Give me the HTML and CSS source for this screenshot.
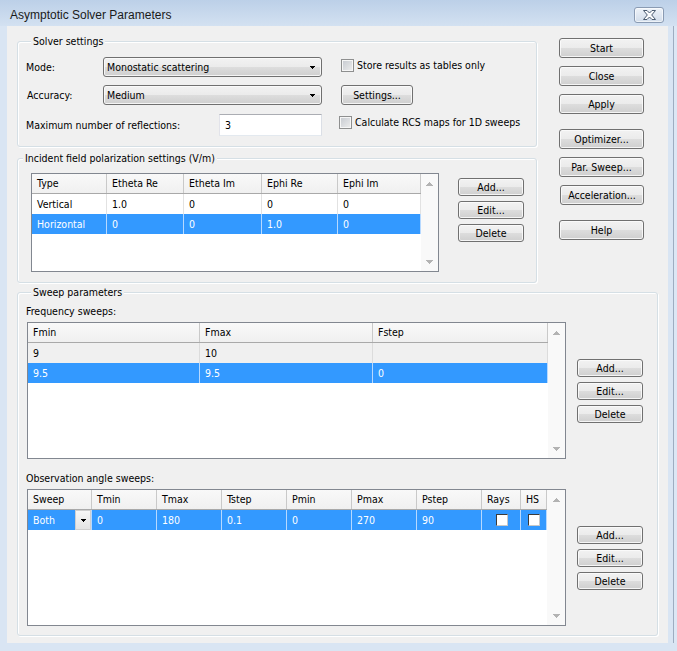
FILE: index.html
```html
<!DOCTYPE html>
<html>
<head>
<meta charset="utf-8">
<title>Asymptotic Solver Parameters</title>
<link rel="stylesheet" href="styles.css">
</head>
<body>
<div class="window">
  <div class="titlebar">
    <span class="title">Asymptotic Solver Parameters</span>
    <div class="close-btn">
      <svg width="13" height="10" viewBox="0 0 13 10"><polygon points="0.5,0.5 4,0.5 6.5,3 9,0.5 12.5,0.5 8.7,5 12.5,9.5 9,9.5 6.5,7 4,9.5 0.5,9.5 4.3,5" fill="#fbfcfd" stroke="#4a5b70" stroke-width="1" stroke-linejoin="round"/></svg>
    </div>
  </div>
  <div class="frame-row">
    <div class="frame-left"></div>
    <div class="client">
      <div class="top">
        <div class="left-col">
          <div class="group solver">
            <div class="group-title">Solver settings</div>
            <div class="row row1">
              <span class="lbl lbl-short">Mode:</span>
              <div class="btn combo"><span>Monostatic scattering</span><svg class="dd-arrow" width="5" height="3" viewBox="0 0 5 3"><rect x="0" y="0" width="5" height="1"/><rect x="1" y="1" width="3" height="1"/><rect x="2" y="2" width="1" height="1"/></svg></div>
              <div class="check-item"><span class="checkbox"></span><span>Store results as tables only</span></div>
            </div>
            <div class="row row2">
              <span class="lbl lbl-short lbl-acc">Accuracy:</span>
              <div class="btn combo"><span>Medium</span><svg class="dd-arrow" width="5" height="3" viewBox="0 0 5 3"><rect x="0" y="0" width="5" height="1"/><rect x="1" y="1" width="3" height="1"/><rect x="2" y="2" width="1" height="1"/></svg></div>
              <div class="btn settings-btn">Settings...</div>
            </div>
            <div class="row row3">
              <span class="lbl lbl-long">Maximum number of reflections:</span>
              <div class="textinput">3</div>
              <div class="check-item check-rcs"><span class="checkbox"></span><span>Calculate RCS maps for 1D sweeps</span></div>
            </div>
          </div>

          <div class="group incident">
            <div class="group-title">Incident field polarization settings (V/m)</div>
            <div class="inc-body">
              <div class="list list-inc">
                <div class="grid">
                  <div class="hdr inc-cols">
                    <div class="cell">Type</div><div class="cell">Etheta Re</div><div class="cell">Etheta Im</div><div class="cell">Ephi Re</div><div class="cell">Ephi Im</div>
                  </div>
                  <div class="r inc-cols">
                    <div class="cell">Vertical</div><div class="cell">1.0</div><div class="cell">0</div><div class="cell">0</div><div class="cell">0</div>
                  </div>
                  <div class="r sel inc-cols">
                    <div class="cell">Horizontal</div><div class="cell">0</div><div class="cell">0</div><div class="cell">1.0</div><div class="cell">0</div>
                  </div>
                </div>
                <div class="scrollbar sb17">
                  <svg width="7" height="4" viewBox="0 0 7 4"><rect x="3" y="0" width="1" height="1"/><rect x="2" y="1" width="3" height="1"/><rect x="1" y="2" width="5" height="1"/><rect x="0" y="3" width="7" height="1"/></svg>
                  <svg width="7" height="4" viewBox="0 0 7 4"><rect x="0" y="0" width="7" height="1"/><rect x="1" y="1" width="5" height="1"/><rect x="2" y="2" width="3" height="1"/><rect x="3" y="3" width="1" height="1"/></svg>
                </div>
              </div>
              <div class="list-buttons inc-buttons">
                <div class="btn small-btn">Add...</div>
                <div class="btn small-btn">Edit...</div>
                <div class="btn small-btn">Delete</div>
              </div>
            </div>
          </div>
        </div>

        <div class="side">
          <div class="btn side-btn">Start</div>
          <div class="btn side-btn">Close</div>
          <div class="btn side-btn">Apply</div>
          <div class="btn side-btn sep">Optimizer...</div>
          <div class="btn side-btn">Par. Sweep...</div>
          <div class="btn side-btn accel">Acceleration...</div>
          <div class="btn side-btn sep">Help</div>
        </div>
      </div>

      <div class="group sweep">
        <div class="group-title">Sweep parameters</div>
        <div class="sub-label freq-label">Frequency sweeps:</div>
        <div class="list-row">
          <div class="list list-big">
            <div class="grid">
              <div class="hdr freq-cols">
                <div class="cell">Fmin</div><div class="cell">Fmax</div><div class="cell">Fstep</div>
              </div>
              <div class="r gray freq-cols">
                <div class="cell">9</div><div class="cell">10</div><div class="cell"></div>
              </div>
              <div class="r sel freq-cols">
                <div class="cell">9.5</div><div class="cell">9.5</div><div class="cell">0</div>
              </div>
            </div>
            <div class="scrollbar sb17">
              <svg width="7" height="4" viewBox="0 0 7 4"><rect x="3" y="0" width="1" height="1"/><rect x="2" y="1" width="3" height="1"/><rect x="1" y="2" width="5" height="1"/><rect x="0" y="3" width="7" height="1"/></svg>
              <svg width="7" height="4" viewBox="0 0 7 4"><rect x="0" y="0" width="7" height="1"/><rect x="1" y="1" width="5" height="1"/><rect x="2" y="2" width="3" height="1"/><rect x="3" y="3" width="1" height="1"/></svg>
            </div>
          </div>
          <div class="list-buttons">
            <div class="btn small-btn">Add...</div>
            <div class="btn small-btn">Edit...</div>
            <div class="btn small-btn">Delete</div>
          </div>
        </div>

        <div class="sub-label obs-label">Observation angle sweeps:</div>
        <div class="list-row">
          <div class="list list-big">
            <div class="grid">
              <div class="hdr obs-cols">
                <div class="cell">Sweep</div><div class="cell">Tmin</div><div class="cell">Tmax</div><div class="cell">Tstep</div><div class="cell">Pmin</div><div class="cell">Pmax</div><div class="cell">Pstep</div><div class="cell">Rays</div><div class="cell">HS</div>
              </div>
              <div class="r sel obs-cols">
                <div class="cell sweep-cell"><span>Both</span><span class="dd-btn"><svg width="5" height="3" viewBox="0 0 5 3"><rect x="0" y="0" width="5" height="1"/><rect x="1" y="1" width="3" height="1"/><rect x="2" y="2" width="1" height="1"/></svg></span></div>
                <div class="cell">0</div><div class="cell">180</div><div class="cell">0.1</div><div class="cell">0</div><div class="cell">270</div><div class="cell">90</div>
                <div class="cell center-cell"><span class="cell-check"></span></div>
                <div class="cell center-cell"><span class="cell-check"></span></div>
              </div>
            </div>
            <div class="scrollbar sb18">
              <svg width="7" height="4" viewBox="0 0 7 4"><rect x="3" y="0" width="1" height="1"/><rect x="2" y="1" width="3" height="1"/><rect x="1" y="2" width="5" height="1"/><rect x="0" y="3" width="7" height="1"/></svg>
              <svg width="7" height="4" viewBox="0 0 7 4"><rect x="0" y="0" width="7" height="1"/><rect x="1" y="1" width="5" height="1"/><rect x="2" y="2" width="3" height="1"/><rect x="3" y="3" width="1" height="1"/></svg>
            </div>
          </div>
          <div class="list-buttons">
            <div class="btn small-btn">Add...</div>
            <div class="btn small-btn">Edit...</div>
            <div class="btn small-btn">Delete</div>
          </div>
        </div>
      </div>
    </div>
    <div class="frame-right"></div>
  </div>
</div>
</body>
</html>
```
FILE: styles.css
```css
html, body {
  margin: 0;
  padding: 0;
  background: #ffffff;
}

.window {
  width: 677px;
  height: 651px;
  background: #d9e5f3;
  display: flex;
  flex-direction: column;
  font-family: "DejaVu Sans Condensed", "DejaVu Sans", sans-serif;
  font-stretch: condensed;
  font-size: 10.5px;
  color: #000;
  overflow: hidden;
}

/* ---------- title bar ---------- */
.titlebar {
  height: 26px;
  box-sizing: border-box;
  padding-top: 7px;
  display: flex;
  align-items: flex-start;
  background: linear-gradient(#bcd0e8, #d3e1f1);
  flex-shrink: 0;
}

.title {
  margin-left: 10px;
  font-family: "Liberation Sans", Arial, sans-serif;
  font-stretch: normal;
  font-size: 12px;
  line-height: 16px;
  color: #1a1a1a;
}

.close-btn {
  margin-left: auto;
  margin-right: 13px;
  width: 30px;
  height: 16px;
  box-sizing: border-box;
  border: 1px solid #8a9bb3;
  border-radius: 3px;
  background: linear-gradient(#eef3f9, #d2ddeb);
  box-shadow: inset 0 0 0 1px rgba(255,255,255,0.6);
  display: flex;
  align-items: center;
  justify-content: center;
}

.close-btn svg {
  display: block;
}

/* ---------- frame ---------- */
.frame-row {
  display: flex;
  height: 617px;
  flex-shrink: 0;
}

.frame-left {
  width: 7px;
  flex-shrink: 0;
}

.frame-right {
  width: 9px;
  flex-shrink: 0;
  background: linear-gradient(to right, #d9e5f3 0, #d9e5f3 5px, #9eadc0 5px, #9eadc0 6px, #dce7f4 6px);
}

.client {
  width: 661px;
  flex-shrink: 0;
  background: #f0f0f0;
}

/* ---------- top section ---------- */
.top {
  display: flex;
}

.left-col {
  margin-left: 10px;
  width: 520px;
  padding-top: 15px;
}

.side {
  margin-left: 22px;
  padding-top: 12px;
  display: flex;
  flex-direction: column;
  gap: 8px;
}

.side-btn {
  width: 85px;
  height: 20px;
}

.side-btn.sep {
  margin-top: 7px;
}

.side-btn.accel {
  margin-left: 1px;
  width: 84px;
}

/* ---------- group boxes ---------- */
.group {
  box-sizing: border-box;
  border: 1px solid #d5dfe5;
  border-radius: 3px;
  box-shadow: inset 1px 1px 0 #ffffff, 1px 1px 0 #ffffff;
}

.group-title {
  width: max-content;
  margin: -7px 0 -6px 5px;
  padding: 0 2px;
  line-height: 13px;
  height: 13px;
  background: #f0f0f0;
}

.solver {
  height: 106px;
  padding-left: 8px;
}

.incident {
  margin-top: 11px;
  height: 125px;
}

.sweep {
  margin: 9px 0 0 10px;
  width: 641px;
  height: 344px;
  padding-left: 8px;
}

/* ---------- solver rows ---------- */
.row {
  display: flex;
  align-items: center;
  height: 20px;
}

.row1 { margin-top: 15px; }
.row2 { margin-top: 8px; }
.row3 { margin-top: 9px; height: 22px; }

.lbl-short { width: 77px; flex-shrink: 0; }
.lbl-acc { padding-left: 1px; width: 76px; }
.lbl-long { width: 193px; flex-shrink: 0; }

.btn {
  box-sizing: border-box;
  border: 1px solid #707070;
  border-radius: 3px;
  background: linear-gradient(#f2f2f2 0%, #ebebeb 50%, #dddddd 51%, #cfcfcf 100%);
  box-shadow: inset 0 0 0 1px rgba(252,252,252,0.85);
  display: flex;
  align-items: center;
  justify-content: center;
  white-space: nowrap;
}

.combo {
  width: 219px;
  height: 20px;
  flex-shrink: 0;
  justify-content: space-between;
  padding: 0 6px 0 3px;
}

.dd-arrow {
  display: block;
  fill: #000;
}

.textinput {
  width: 103px;
  height: 22px;
  flex-shrink: 0;
  box-sizing: border-box;
  border: 1px solid;
  border-color: #abadb3 #dbdfe6 #e3e9ef #e2e3ea;
  background: #ffffff;
  padding-left: 5px;
  display: flex;
  align-items: center;
}

.check-item {
  margin-left: 19px;
  align-self: flex-start;
  margin-top: 2px;
  display: flex;
  align-items: center;
  gap: 3px;
  line-height: 13px;
  white-space: nowrap;
}

.check-rcs {
  margin-left: 17px;
}

.checkbox {
  width: 13px;
  height: 13px;
  box-sizing: border-box;
  border: 1px solid #8e8f8f;
  background: linear-gradient(135deg, #c5c9cf 0%, #eeeeee 100%);
  box-shadow: inset 0 0 0 1px #f6f6f6;
  flex-shrink: 0;
}

.settings-btn {
  margin-left: 19px;
  width: 72px;
  height: 20px;
}

/* ---------- lists ---------- */
.inc-body {
  display: flex;
  padding: 14px 0 0 13px;
}

.list {
  box-sizing: border-box;
  border: 1px solid #828790;
  background: #ffffff;
  display: flex;
}

.list-inc {
  width: 408px;
  height: 99px;
}

.list-big {
  width: 539px;
  height: 137px;
}

.grid {
  flex: 1;
}

.scrollbar {
  box-sizing: border-box;
  background: #f9f9f9;
  display: flex;
  flex-direction: column;
  justify-content: space-between;
  align-items: center;
  padding: 8px 0 7px;
  fill: #b3b3b3;
}

.scrollbar svg { display: block; }

.sb17 { width: 17px; }
.sb18 { width: 18px; }

.inc-cols { display: grid; grid-template-columns: 75px 77px 78px 76px 83px; }
.freq-cols { display: grid; grid-template-columns: 172px 173px 175px; }
.obs-cols { display: grid; grid-template-columns: 64px 65px 65px 65px 65px 65px 65px 39px 26px; }

.cell {
  box-sizing: border-box;
  padding-left: 5px;
  border-right: 1px solid #e2e2e2;
  white-space: nowrap;
  overflow: hidden;
}

.hdr {
  height: 20px;
  box-sizing: border-box;
  background: linear-gradient(#f9f9f9, #f0f0f0);
  border-bottom: 1px solid #a9a9a9;
}

.hdr .cell {
  line-height: 19px;
  border-right-color: #c9c9c9;
}

.r {
  height: 20px;
}

.r .cell {
  line-height: 20px;
  height: 20px;
}

.r.gray {
  background: #f0f0f0;
}

.r.gray .cell {
  border-right-color: #dcdcdc;
}

.r.sel {
  background: #3399ff;
  color: #ffffff;
}

.r.sel .cell {
  border-right-color: #b7d9ff;
}

.sweep-cell {
  display: flex;
  justify-content: space-between;
  padding-right: 0;
}

.dd-btn {
  width: 16px;
  height: 20px;
  box-sizing: border-box;
  border: 1px solid #cfcfcf;
  background: linear-gradient(#f7f7f7, #e4e4e4);
  display: flex;
  align-items: center;
  justify-content: center;
  fill: #000;
}

.dd-btn svg { display: block; }

.center-cell {
  display: flex;
  align-items: center;
  justify-content: center;
  padding-left: 2px;
}

.obs-cols .center-cell:last-child {
  padding-left: 0;
}

.cell-check {
  width: 12px;
  height: 12px;
  box-sizing: border-box;
  border: 1px solid;
  border-color: #3a3a3a #c8c8c8 #c8c8c8 #3a3a3a;
  background: #ffffff;
}

.list-buttons {
  display: flex;
  flex-direction: column;
  gap: 5px;
  margin-left: 11px;
  margin-top: 37px;
}

.inc-buttons {
  margin-left: 19px;
  margin-top: 5px;
}

.small-btn {
  width: 66px;
  height: 18px;
}

/* ---------- sweep section ---------- */
.sub-label {
  line-height: 13px;
  height: 13px;
}

.freq-label { margin-top: 12px; }
.obs-label { margin-top: 13px; }

.list-row {
  display: flex;
  align-items: flex-start;
  margin-top: 4px;
  margin-left: 1px;
}
```
